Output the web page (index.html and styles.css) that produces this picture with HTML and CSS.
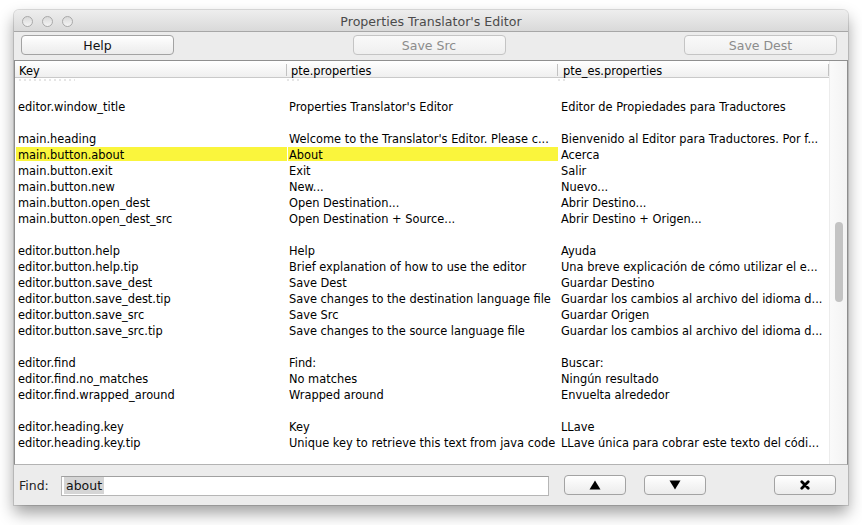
FILE: index.html
```html
<!DOCTYPE html>
<html>
<head>
<meta charset="utf-8">
<link rel="stylesheet" href="styles.css">
</head>
<body>
<div class="window">
  <div class="titlebar">
    <div class="lights"><span class="light"></span><span class="light"></span><span class="light"></span></div>
    <div class="title">Properties Translator's Editor</div>
    <div></div>
  </div>
  <div class="toolbar">
    <button class="btn wide">Help</button>
    <button class="btn wide disabled">Save Src</button>
    <button class="btn wide disabled">Save Dest</button>
  </div>
  <div class="table">
    <div class="grid">
      <div class="header">
        <div class="th c1">Key</div>
        <div class="th c2">pte.properties</div>
        <div class="th c3">pte_es.properties</div>
      </div>
      <div class="rows">
        <div class="row partial"><div class="smudge s1"></div><div class="smudge s2"></div><div class="smudge s3"></div></div>
        <div class="row"><div class="td c1"></div><div class="td c2"></div><div class="td c3"></div></div>
        <div class="row"><div class="td c1">editor.window_title</div><div class="td c2">Properties Translator's Editor</div><div class="td c3">Editor de Propiedades para Traductores</div></div>
        <div class="row"><div class="td c1"></div><div class="td c2"></div><div class="td c3"></div></div>
        <div class="row"><div class="td c1">main.heading</div><div class="td c2">Welcome to the Translator's Editor. Please c...</div><div class="td c3">Bienvenido al Editor para Traductores. Por f...</div></div>
        <div class="row hl"><div class="td c1">main.button.about</div><div class="td c2">About</div><div class="td c3">Acerca</div></div>
        <div class="row"><div class="td c1">main.button.exit</div><div class="td c2">Exit</div><div class="td c3">Salir</div></div>
        <div class="row"><div class="td c1">main.button.new</div><div class="td c2">New...</div><div class="td c3">Nuevo...</div></div>
        <div class="row"><div class="td c1">main.button.open_dest</div><div class="td c2">Open Destination...</div><div class="td c3">Abrir Destino...</div></div>
        <div class="row"><div class="td c1">main.button.open_dest_src</div><div class="td c2">Open Destination + Source...</div><div class="td c3">Abrir Destino + Origen...</div></div>
        <div class="row"><div class="td c1"></div><div class="td c2"></div><div class="td c3"></div></div>
        <div class="row"><div class="td c1">editor.button.help</div><div class="td c2">Help</div><div class="td c3">Ayuda</div></div>
        <div class="row"><div class="td c1">editor.button.help.tip</div><div class="td c2">Brief explanation of how to use the editor</div><div class="td c3">Una breve explicación de cómo utilizar el e...</div></div>
        <div class="row"><div class="td c1">editor.button.save_dest</div><div class="td c2">Save Dest</div><div class="td c3">Guardar Destino</div></div>
        <div class="row"><div class="td c1">editor.button.save_dest.tip</div><div class="td c2">Save changes to the destination language file</div><div class="td c3">Guardar los cambios al archivo del idioma d...</div></div>
        <div class="row"><div class="td c1">editor.button.save_src</div><div class="td c2">Save Src</div><div class="td c3">Guardar Origen</div></div>
        <div class="row"><div class="td c1">editor.button.save_src.tip</div><div class="td c2">Save changes to the source language file</div><div class="td c3">Guardar los cambios al archivo del idioma d...</div></div>
        <div class="row"><div class="td c1"></div><div class="td c2"></div><div class="td c3"></div></div>
        <div class="row"><div class="td c1">editor.find</div><div class="td c2">Find:</div><div class="td c3">Buscar:</div></div>
        <div class="row"><div class="td c1">editor.find.no_matches</div><div class="td c2">No matches</div><div class="td c3">Ningún resultado</div></div>
        <div class="row"><div class="td c1">editor.find.wrapped_around</div><div class="td c2">Wrapped around</div><div class="td c3">Envuelta alrededor</div></div>
        <div class="row"><div class="td c1"></div><div class="td c2"></div><div class="td c3"></div></div>
        <div class="row"><div class="td c1">editor.heading.key</div><div class="td c2">Key</div><div class="td c3">LLave</div></div>
        <div class="row"><div class="td c1">editor.heading.key.tip</div><div class="td c2">Unique key to retrieve this text from java code</div><div class="td c3">LLave única para cobrar este texto del códi...</div></div>
        <div class="row"><div class="td c1"></div><div class="td c2"></div><div class="td c3"></div></div>
      </div>
    </div>
    <div class="vscroll"><div class="thumb"></div></div>
  </div>
  <div class="findbar">
    <span class="findlabel">Find:</span>
    <div class="field"><span class="sel">about</span></div>
    <button class="btn small up"><svg width="12" height="10" viewBox="0 0 12 10"><polygon points="6,0.5 11.5,9.5 0.5,9.5" fill="#000"/></svg></button>
    <button class="btn small down"><svg width="12" height="10" viewBox="0 0 12 10"><polygon points="0.5,0.5 11.5,0.5 6,9.5" fill="#000"/></svg></button>
    <button class="btn small close"><svg width="10" height="10" viewBox="0 0 10 10"><path d="M1.8 1.8 L8.2 8.2 M8.2 1.8 L1.8 8.2" stroke="#000" stroke-width="2.8" stroke-linecap="round"/></svg></button>
  </div>
</div>
</body>
</html>
```
FILE: styles.css
```css
html, body {
  margin: 0;
  padding: 0;
  background: #ffffff;
}
body {
  font-family: "DejaVu Sans", "Liberation Sans", sans-serif;
  width: 862px;
  height: 525px;
  overflow: hidden;
}
.window {
  margin: 10px 0 0 14px;
  width: 834px;
  height: 495px;
  background: #ececec;
  border-radius: 5px 5px 0 0;
  box-shadow: 0 0 0 1px rgba(0,0,0,0.12), 0 8px 16px rgba(0,0,0,0.38);
  display: flex;
  flex-direction: column;
  overflow: hidden;
}
.titlebar {
  height: 21px;
  flex: none;
  border-bottom: 1px solid #a7a7a7;
  background: linear-gradient(#eeeeee, #d9d9d9);
  display: grid;
  grid-template-columns: 1fr auto 1fr;
  align-items: center;
}
.lights {
  display: flex;
  gap: 9px;
  padding-left: 8px;
}
.light {
  border-radius: 50%;
  border: 1px solid #a9a9a9;
  background: linear-gradient(#d9d9d9, #f4f4f4);
  box-sizing: border-box;
  width: 11px;
  height: 11px;
}
.title {
  font-size: 12.6px;
  color: #4b4b4b;
  line-height: 21px;
  padding-top: 1px;
}
.toolbar {
  height: 28px;
  flex: none;
  display: flex;
  justify-content: space-between;
  align-items: flex-start;
  padding: 3px 11px 0 7px;
  box-sizing: border-box;
}
.btn {
  font-family: "DejaVu Sans", "Liberation Sans", sans-serif;
  font-size: 12.5px;
  color: #111;
  height: 20px;
  padding: 0;
  margin: 0;
  border: 1px solid #a3a3a3;
  border-radius: 4px;
  background: linear-gradient(#ffffff, #f3f3f3 60%, #ececec);
  display: flex;
  align-items: center;
  justify-content: center;
  box-sizing: border-box;
}
.btn.wide {
  width: 153px;
}
.btn.disabled {
  color: #8c8c8c;
  border-color: #c4c4c4;
  background: linear-gradient(#f9f9f9, #efefef);
}
.table {
  flex: none;
  height: 405px;
  box-sizing: border-box;
  border-top: 1px solid #8f8f8f;
  border-bottom: 1px solid #b3b3b3;
  border-left: 1px solid #8e8e8e;
  border-right: 1px solid #8e8e8e;
  background: #ffffff;
  display: flex;
}
.grid {
  width: 814px;
  display: flex;
  flex-direction: column;
  overflow: hidden;
}
.header {
  height: 17px;
  flex: none;
  box-sizing: border-box;
  border-bottom: 1px solid #c9c9c9;
  background: linear-gradient(#ffffff, #efefef);
  display: grid;
  grid-template-columns: 272px 271px 271px;
  font-size: 11.4px;
}
.th {
  border-right: 1px solid #c2c2c2;
  margin: 3px 0 1px;
  height: 12px;
  line-height: 14px;
  white-space: nowrap;
  overflow: visible;
}
.th.c1 { padding-left: 4px; }
.th.c2 { padding-left: 4px; }
.th.c3 { padding-left: 5px; }
.rows {
  flex: 1;
  overflow: hidden;
  font-size: 11.4px;
  color: #000;
}
.row {
  display: grid;
  grid-template-columns: 272px 271px 271px;
  height: 16px;
  line-height: 18px;
}
.row.partial {
  height: 4px;
  display: flex;
  align-items: flex-start;
  padding-top: 1px;
  box-sizing: border-box;
}
.smudge {
  height: 2px;
  background: repeating-linear-gradient(90deg, #e6e6e6 0 2px, transparent 2px 5px);
}
.s1 { width: 56px; margin-left: 4px; }
.s2 { width: 14px; margin-left: 212px; }
.s3 { width: 10px; margin-left: 257px; }
.td {
  white-space: nowrap;
  overflow: hidden;
}
.td.c1 { padding-left: 3px; }
.td.c2 { padding-left: 2px; }
.td.c3 { padding-left: 3px; }
.row.hl .c1 {
  background: #faf53c;
  box-shadow: inset 0 1px #fff, inset 0 -1px #fff, inset 1px 0 #fff;
}
.row.hl .c2 {
  background: #faf53c;
  box-shadow: inset 0 1px #fff, inset 0 -1px #fff, inset 1px 0 #fff;
}
.vscroll {
  width: 18px;
  flex: none;
  box-sizing: border-box;
  border-left: 1px solid #ececec;
  background: linear-gradient(90deg, #fafafa, #f3f3f3);
  padding-top: 161px;
  display: flex;
  justify-content: center;
}
.thumb {
  width: 8px;
  height: 80px;
  border-radius: 4px;
  background: #c3c3c3;
}
.findbar {
  flex: 1;
  display: flex;
  align-items: center;
  padding: 0 0 0 5px;
}
.findlabel {
  font-size: 12.5px;
  color: #222;
  width: 42px;
  padding-top: 1px;
}
.field {
  width: 488px;
  height: 20px;
  box-sizing: border-box;
  border: 1px solid #b6b6b6;
  border-top-color: #a0a0a0;
  background: #fff;
  font-size: 12.5px;
  line-height: 18px;
  padding-left: 2px;
  margin-right: 15px;
  margin-top: 1px;
}
.sel {
  background: #d5d5d5;
  padding: 1px 2px;
  color: #111;
}
.btn.small {
  width: 62px;
  margin-top: -1px;
}
.btn.up { margin-right: 18px; }
.btn.down { margin-right: 68px; }
```
